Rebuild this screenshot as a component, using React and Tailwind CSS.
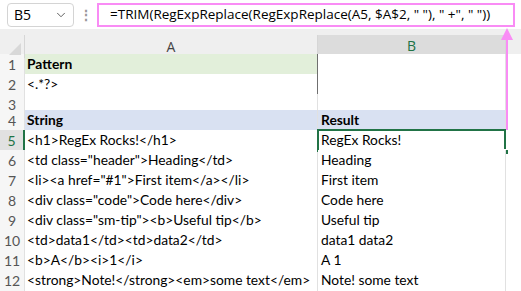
import { ChevronDown } from "lucide-react";

const rows = [
  { n: 1, a: "Pattern", b: "", h: "h-5", kind: "pattern" },
  { n: 2, a: "<.*?>", b: "", h: "h-5", kind: "patternValue" },
  { n: 3, a: "", b: "", h: "h-4", kind: "plain" },
  { n: 4, a: "String", b: "Result", h: "h-5", kind: "head" },
  { n: 5, a: "<h1>RegEx Rocks!</h1>", b: "RegEx Rocks!", h: "h-5", kind: "active" },
  { n: 6, a: '<td class="header">Heading</td>', b: "Heading", h: "h-5", kind: "plain" },
  { n: 7, a: '<li><a href="#1">First item</a></li>', b: "First item", h: "h-5", kind: "plain" },
  { n: 8, a: '<div class="code">Code here</div>', b: "Code here", h: "h-5", kind: "plain" },
  { n: 9, a: '<div class="sm-tip"><b>Useful tip</b>', b: "Useful tip", h: "h-5", kind: "plain" },
  { n: 10, a: "<td>data1</td><td>data2</td>", b: "data1 data2", h: "h-5", kind: "plain" },
  { n: 11, a: "<b>A</b><i>1</i>", b: "A 1", h: "h-5", kind: "plain" },
  { n: 12, a: "<strong>Note!</strong><em>some text</em>", b: "Note! some text", h: "h-5", kind: "plain" },
];

const Row = ({ row }) => {
  const active = row.kind === "active";
  const bold = row.kind === "pattern" || row.kind === "head";
  const aBg =
    row.kind === "pattern" ? "bg-[#e2efda]" : row.kind === "head" ? "bg-[#d9e1f2]" : "bg-white";
  const bBg = row.kind === "head" ? "bg-[#d9e1f2]" : "bg-white";
  const aBorder =
    row.kind === "pattern" || row.kind === "patternValue"
      ? "border-r-[#6f6f6f]"
      : "border-r-[#e1e1e1]";
  const aBottom = row.kind === "patternValue" ? "border-b-[#6f6f6f]" : "border-b-[#e1e1e1]";

  return (
    <div className={`grid grid-cols-[25px_293px_188px_1fr] ${row.h}`}>
      <div
        className={`flex items-center justify-center border-b border-r border-[#e1e1e1] text-[14px] ${
          active ? "bg-[#e1e1e1] text-[#217346] border-r-2 border-r-[#217346]" : "bg-[#f6f6f6] text-[#555]"
        }`}
      >
        {row.n}
      </div>
      <div
        className={`flex items-center overflow-hidden whitespace-nowrap border-b border-r pl-[2px] text-black ${aBg} ${aBorder} ${aBottom} ${
          bold ? "font-bold" : ""
        }`}
      >
        {row.a}
      </div>
      <div
        className={`relative flex items-center whitespace-nowrap border-b border-r border-[#e1e1e1] pl-[3px] text-black ${bBg} ${
          bold ? "font-bold" : ""
        }`}
      >
        {row.b}
        {active && (
          <>
            <div className="absolute -left-[1px] -top-[1px] -right-[1px] -bottom-[1px] border-2 border-[#217346]" />
            <div className="absolute -bottom-[4px] -right-[4px] h-[6px] w-[6px] border border-white bg-[#217346]" />
          </>
        )}
      </div>
      <div className="border-b border-[#e1e1e1] bg-white" />
    </div>
  );
};

export default function App() {
  return (
    <div className="relative h-[291px] w-[521px] overflow-hidden bg-white font-['Lato','Liberation_Sans',sans-serif] text-[13.8px]">
      {/* formula bar */}
      <div className="flex h-[29px] items-center bg-white pl-[7px] pr-[6px]">
        <div className="flex h-[24px] w-[67px] items-center justify-between rounded-[4px] border border-[#d4d4d4] pl-[6px] pr-[5px] font-['Open_Sans',sans-serif] text-[14px] text-black">
          <span>B5</span>
          <ChevronDown size={14} strokeWidth={1.6} className="text-[#555]" />
        </div>
        <div className="flex w-[23px] justify-center text-[14px] font-bold leading-none text-[#999]">⋮</div>
        <div className="flex h-[24px] flex-1 items-center border-2 border-[#f98cf5] pl-[11px] font-['Open_Sans',sans-serif] text-[13.5px] text-black whitespace-nowrap">
          =TRIM(RegExpReplace(RegExpReplace(A5, $A$2, " "), " +", " "))
        </div>
      </div>

      {/* column headers */}
      <div className="bg-[#efefef] pt-[6px]">
        <div className="grid h-[19px] grid-cols-[25px_293px_188px_1fr] font-['Open_Sans',sans-serif] text-[14px]">
          <div className="relative border-r border-[#d6d6d6]">
            <div className="absolute bottom-[3px] right-[3px] h-0 w-0 border-b-[12px] border-l-[12px] border-b-[#d8d8d8] border-l-transparent" />
          </div>
          <div className="flex items-center justify-center border-r border-[#d6d6d6] text-[#444]">A</div>
          <div className="flex items-center justify-center border-b-2 border-r border-[#217346] border-r-[#d6d6d6] bg-[#dcdcdc] text-[#217346]">
            B
          </div>
          <div className="bg-[#efefef]" />
        </div>
      </div>

      {/* grid */}
      <div>
        {rows.map((r) => (
          <Row key={r.n} row={r} />
        ))}
      </div>

      {/* pink arrow */}
      <div className="absolute left-[501px] top-[28px] h-0 w-0 border-b-[12px] border-l-[6px] border-r-[6px] border-b-[#f98cf5] border-l-transparent border-r-transparent" />
      <div className="absolute left-[506px] top-[38px] h-[92px] w-[2px] bg-[#f98cf5]" />
    </div>
  );
}
